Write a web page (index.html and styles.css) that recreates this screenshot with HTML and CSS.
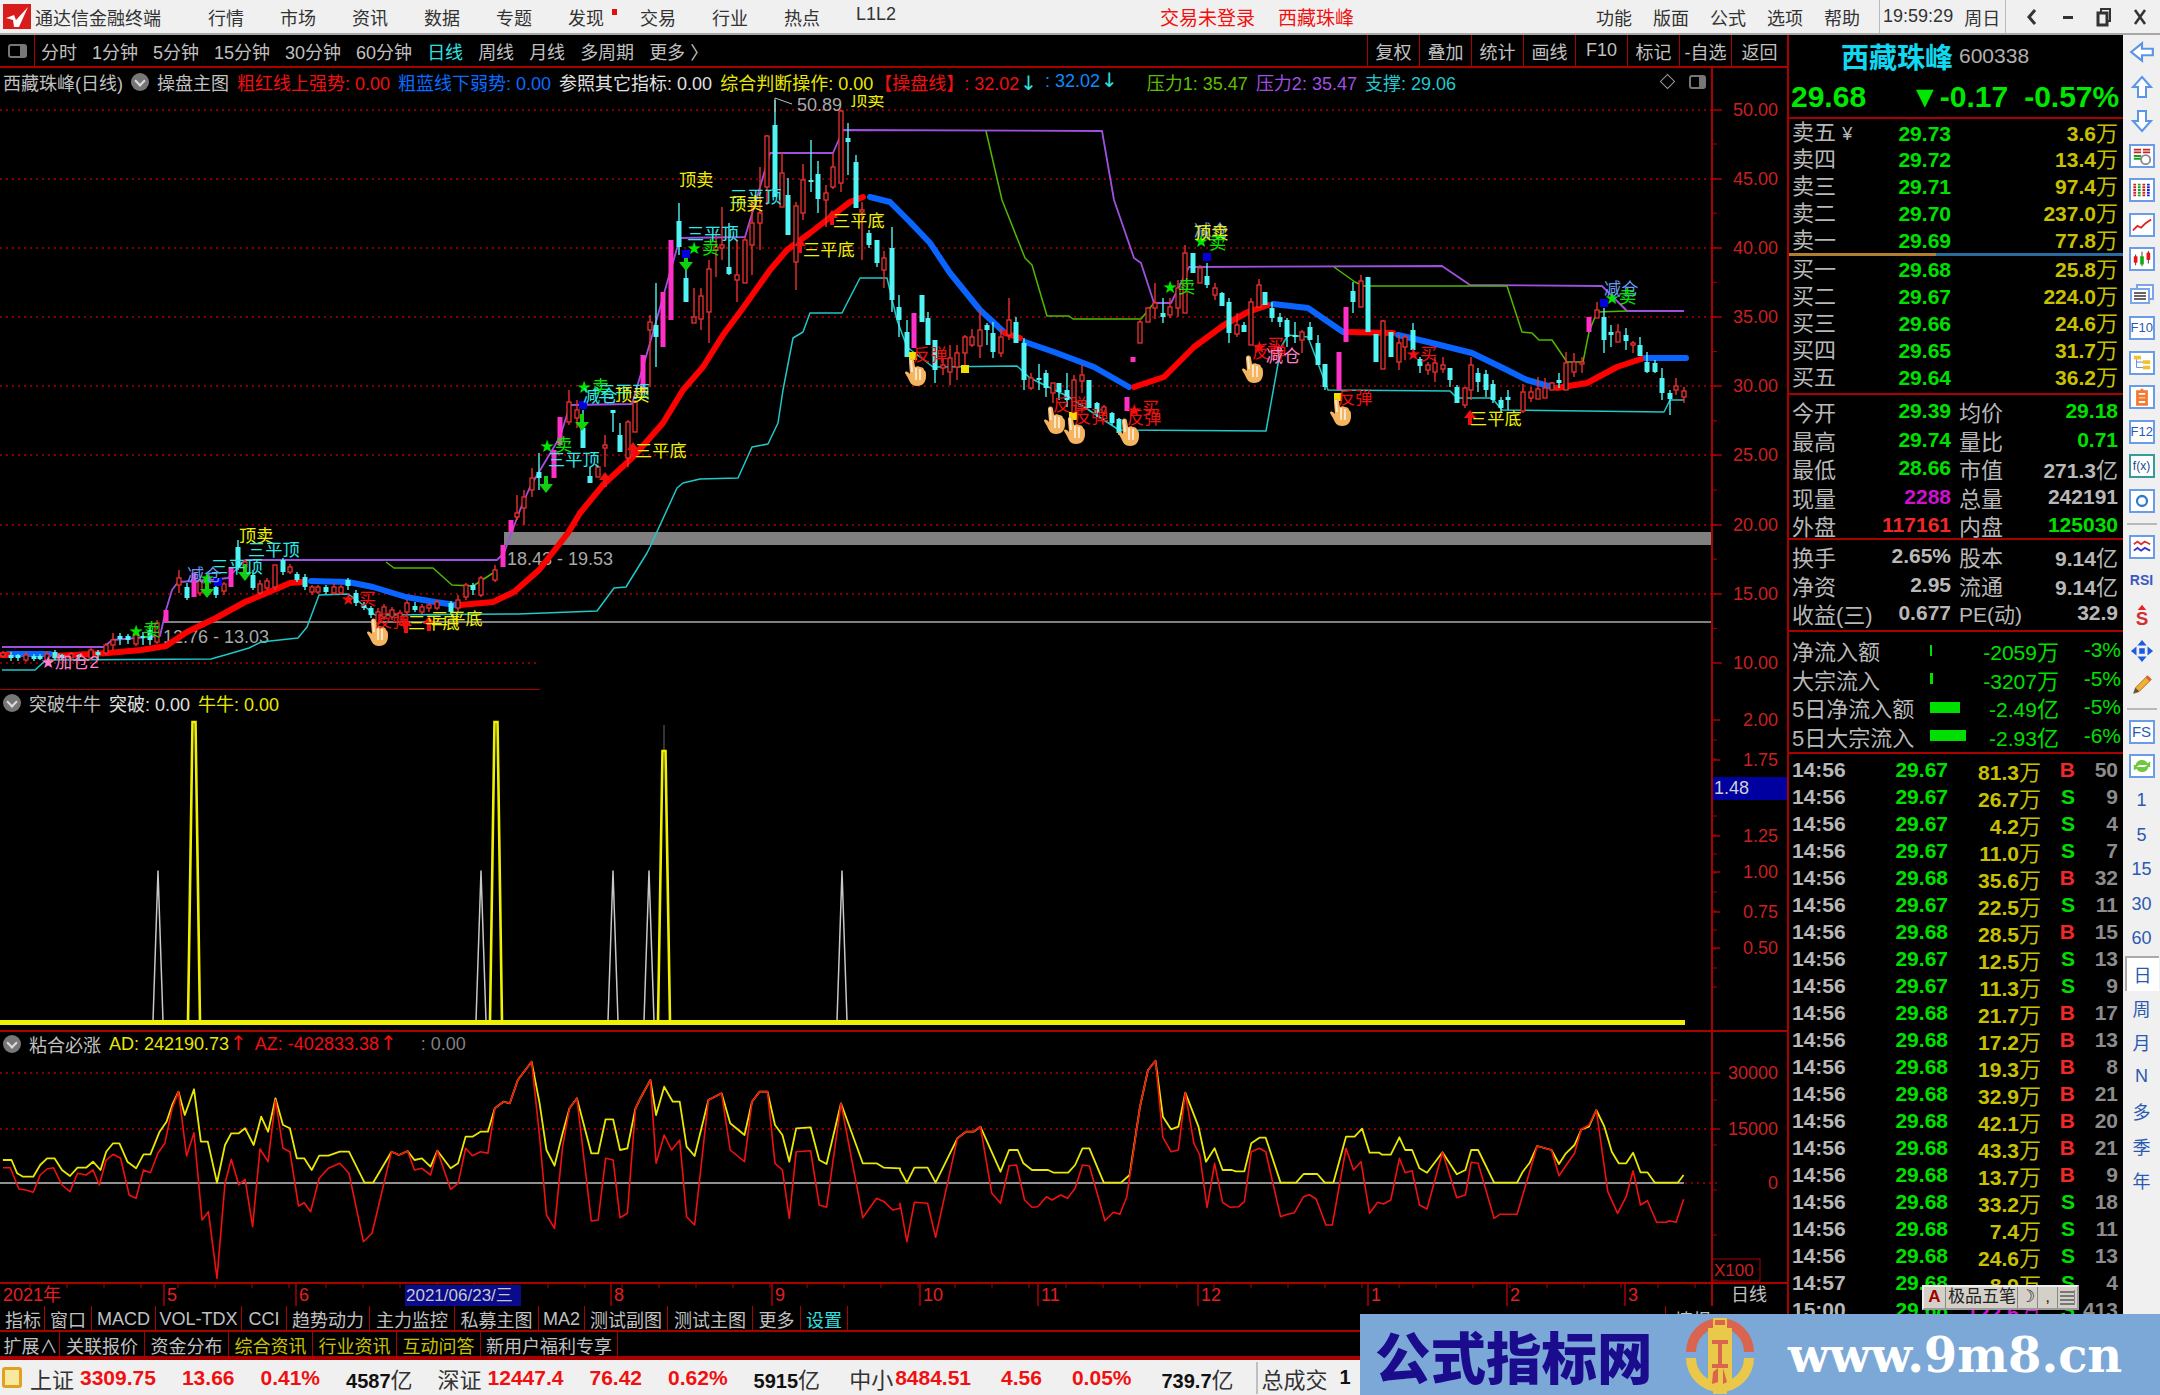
FILE: index.html
```html
<!DOCTYPE html>
<html lang="zh-CN">
<head>
  <meta charset="UTF-8">
  <title>通达信金融终端</title>
  <link rel="stylesheet" href="styles.css">
</head>
<body>

  <header class="titlebar">
    <svg class="app-logo" viewBox="0 0 28 25"><rect width="28" height="25" fill="#d81c1c"/><path d="M3 14 L11 11 L13 16 L25 3 L16 23 L11 23 L10 16 Z" fill="#fff"/></svg>
    <span class="app-name">通达信金融终端</span>
    <nav class="menu">
      <span>行情</span><span>市场</span><span>资讯</span><span>数据</span><span>专题</span>
      <span class="has-dot">发现</span><span>交易</span><span>行业</span><span>热点</span><span>L1L2</span>
    </nav>
    <span class="login">交易未登录</span>
    <span class="login name">西藏珠峰</span>
    <nav class="menu right">
      <span>功能</span><span>版面</span><span>公式</span><span>选项</span><span>帮助</span>
    </nav>
    <div class="clock"><span>19:59:29</span><span>周日</span></div>
    <div class="winbtns">
      <svg viewBox="0 0 16 20"><path d="M11 3 L5 10 L11 17" fill="none" stroke="#333" stroke-width="3"/></svg>
      <svg viewBox="0 0 16 20"><rect x="3" y="9" width="10" height="3" fill="#333"/></svg>
      <svg viewBox="0 0 16 20"><rect x="5" y="2" width="9" height="12" fill="none" stroke="#333" stroke-width="2"/><rect x="2" y="6" width="9" height="12" fill="#f0f0f0" stroke="#333" stroke-width="3"/></svg>
      <svg viewBox="0 0 16 20"><path d="M3 3 L13 17 M13 3 L3 17" stroke="#333" stroke-width="2.5"/></svg>
    </div>
  </header>

  <div class="workspace">
    <main class="charts">
      <div class="toolbar">
        <div class="tb-toggle"><i></i></div>
        <div class="periods">
          <span>分时</span><span>1分钟</span><span>5分钟</span><span>15分钟</span><span>30分钟</span><span>60分钟</span>
          <span class="on">日线</span><span>周线</span><span>月线</span><span>多周期</span><span>更多 〉</span>
        </div>
        <div class="tb-btns">
          <span>复权</span><span>叠加</span><span>统计</span><span>画线</span><span>F10</span><span>标记</span><span>-自选</span><span class="last">返回</span>
        </div>
      </div>

      <div class="phead">
        <span class="grey">西藏珠峰(日线)</span>
        <i class="fold"></i>
        <span class="grey">操盘主图</span>
        <span class="red">粗红线上强势: 0.00</span>
        <span class="blue">粗蓝线下弱势: 0.00</span>
        <span class="white">参照其它指标: 0.00</span>
        <span class="yellow">综合判断操作: 0.00</span>
        <span class="red pull">【操盘线】: 32.02<b class="ar cy">↓</b></span>
        <span class="blue2">: 32.02<b class="ar cy">↓</b></span>
        <span class="lime pushed">压力1: 35.47</span>
        <span class="violet">压力2: 35.47</span>
        <span class="aqua">支撑: 29.06</span>
        <span class="head-tools">
          <i class="diamond"></i>
          <i class="mini"></i>
        </span>
      </div>
      <svg id="main-chart" class="plot p-main" viewBox="0 95 1787 595"></svg>

      <div class="phead sub">
        <i class="fold"></i>
        <span class="grey">突破牛牛</span>
        <span class="white">突破: 0.00</span>
        <span class="yellow">牛牛: 0.00</span>
      </div>
      <svg id="spike-chart" class="plot p-spike" viewBox="0 716 1787 316"></svg>

      <div class="phead sub">
        <i class="fold"></i>
        <span class="grey">粘合必涨</span>
        <span class="yellow">AD: 242190.73<b class="ar red">↑</b></span>
        <span class="red">AZ: -402833.38<b class="ar red">↑</b></span>
        <span class="dim">: 0.00</span>
      </div>
      <svg id="ad-chart" class="plot p-ad" viewBox="0 1056 1787 226"></svg>

      <svg id="date-axis" class="plot p-date" viewBox="0 1282 1787 24"></svg>

      <div class="tabs tabs-a">
        <span>指标</span><span>窗口</span><span>MACD</span><span>VOL-TDX</span><span>CCI</span><span>趋势动力</span><span>主力监控</span><span>私募主图</span><span>MA2</span><span>测试副图</span><span>测试主图</span><span>更多</span><span class="aq">设置</span>
        <span class="tabs-end">情报</span>
      </div>
      <div class="tabs tabs-b">
        <span>扩展∧</span><span>关联报价</span><span>资金分布</span><span class="ye">综合资讯</span><span class="ye">行业资讯</span><span class="ye">互动问答</span><span>新用户福利专享</span>
      </div>
    </main>

    <aside class="quote">
      <div class="q-title"><span class="q-name">西藏珠峰</span><span class="q-code">600338</span></div>
      <div class="q-price"><span>29.68</span><span>▼-0.17</span><span>-0.57%</span></div>

      <div class="book">
        <div class="row"><span class="lb">卖五 <small>¥</small></span><b class="gr">29.73</b><b class="ye">3.6<u>万</u></b></div>
        <div class="row"><span class="lb">卖四</span><b class="gr">29.72</b><b class="ye">13.4<u>万</u></b></div>
        <div class="row"><span class="lb">卖三</span><b class="gr">29.71</b><b class="ye">97.4<u>万</u></b></div>
        <div class="row"><span class="lb">卖二</span><b class="gr">29.70</b><b class="ye">237.0<u>万</u></b></div>
        <div class="row"><span class="lb">卖一</span><b class="gr">29.69</b><b class="ye">77.8<u>万</u></b></div>
        <div class="book-mid"><i></i><i></i></div>
        <div class="row"><span class="lb">买一</span><b class="gr">29.68</b><b class="ye">25.8<u>万</u></b></div>
        <div class="row"><span class="lb">买二</span><b class="gr">29.67</b><b class="ye">224.0<u>万</u></b></div>
        <div class="row"><span class="lb">买三</span><b class="gr">29.66</b><b class="ye">24.6<u>万</u></b></div>
        <div class="row"><span class="lb">买四</span><b class="gr">29.65</b><b class="ye">31.7<u>万</u></b></div>
        <div class="row"><span class="lb">买五</span><b class="gr">29.64</b><b class="ye">36.2<u>万</u></b></div>
      </div>

      <div class="stats">
        <div class="srow"><span class="lb">今开</span><b class="gr">29.39</b><span class="lb">均价</span><b class="gr">29.18</b></div>
        <div class="srow"><span class="lb">最高</span><b class="gr">29.74</b><span class="lb">量比</span><b class="gr">0.71</b></div>
        <div class="srow"><span class="lb">最低</span><b class="gr">28.66</b><span class="lb">市值</span><b class="gy">271.3<u>亿</u></b></div>
        <div class="srow"><span class="lb">现量</span><b class="mg">2288</b><span class="lb">总量</span><b class="gy">242191</b></div>
        <div class="srow"><span class="lb">外盘</span><b class="rd">117161</b><span class="lb">内盘</span><b class="gr">125030</b></div>
      </div>

      <div class="stats fin">
        <div class="srow"><span class="lb">换手</span><b class="gy">2.65%</b><span class="lb">股本</span><b class="gy">9.14<u>亿</u></b></div>
        <div class="srow"><span class="lb">净资</span><b class="gy">2.95</b><span class="lb">流通</span><b class="gy">9.14<u>亿</u></b></div>
        <div class="srow"><span class="lb">收益(三)</span><b class="gy">0.677</b><span class="lb pe">PE(动)</span><b class="gy">32.9</b></div>
      </div>

      <div class="flows">
        <div class="frow"><span class="lb">净流入额</span><i class="bar" style="width:2px;height:11px"></i><b class="gr">-2059<u>万</u></b><b class="gr">-3%</b></div>
        <div class="frow"><span class="lb">大宗流入</span><i class="bar" style="width:3px;height:11px"></i><b class="gr">-3207<u>万</u></b><b class="gr">-5%</b></div>
        <div class="frow"><span class="lb">5日净流入额</span><i class="bar" style="width:30px;height:11px"></i><b class="gr">-2.49<u>亿</u></b><b class="gr">-5%</b></div>
        <div class="frow"><span class="lb">5日大宗流入</span><i class="bar" style="width:36px;height:11px"></i><b class="gr">-2.93<u>亿</u></b><b class="gr">-6%</b></div>
      </div>

      <div class="trades">
        <div class="trow"><b>14:56</b><b class="gr">29.67</b><b class="ye">81.3<u>万</u></b><b class="rd">B</b><b class="ct">50</b></div>
        <div class="trow"><b>14:56</b><b class="gr">29.67</b><b class="ye">26.7<u>万</u></b><b class="gr">S</b><b class="ct">9</b></div>
        <div class="trow"><b>14:56</b><b class="gr">29.67</b><b class="ye">4.2<u>万</u></b><b class="gr">S</b><b class="ct">4</b></div>
        <div class="trow"><b>14:56</b><b class="gr">29.67</b><b class="ye">11.0<u>万</u></b><b class="gr">S</b><b class="ct">7</b></div>
        <div class="trow"><b>14:56</b><b class="gr">29.68</b><b class="ye">35.6<u>万</u></b><b class="rd">B</b><b class="ct">32</b></div>
        <div class="trow"><b>14:56</b><b class="gr">29.67</b><b class="ye">22.5<u>万</u></b><b class="gr">S</b><b class="ct">11</b></div>
        <div class="trow"><b>14:56</b><b class="gr">29.68</b><b class="ye">28.5<u>万</u></b><b class="rd">B</b><b class="ct">15</b></div>
        <div class="trow"><b>14:56</b><b class="gr">29.67</b><b class="ye">12.5<u>万</u></b><b class="gr">S</b><b class="ct">13</b></div>
        <div class="trow"><b>14:56</b><b class="gr">29.67</b><b class="ye">11.3<u>万</u></b><b class="gr">S</b><b class="ct">9</b></div>
        <div class="trow"><b>14:56</b><b class="gr">29.68</b><b class="ye">21.7<u>万</u></b><b class="rd">B</b><b class="ct">17</b></div>
        <div class="trow"><b>14:56</b><b class="gr">29.68</b><b class="ye">17.2<u>万</u></b><b class="rd">B</b><b class="ct">13</b></div>
        <div class="trow"><b>14:56</b><b class="gr">29.68</b><b class="ye">19.3<u>万</u></b><b class="rd">B</b><b class="ct">8</b></div>
        <div class="trow"><b>14:56</b><b class="gr">29.68</b><b class="ye">32.9<u>万</u></b><b class="rd">B</b><b class="ct">21</b></div>
        <div class="trow"><b>14:56</b><b class="gr">29.68</b><b class="ye">42.1<u>万</u></b><b class="rd">B</b><b class="ct">20</b></div>
        <div class="trow"><b>14:56</b><b class="gr">29.68</b><b class="ye">43.3<u>万</u></b><b class="rd">B</b><b class="ct">21</b></div>
        <div class="trow"><b>14:56</b><b class="gr">29.68</b><b class="ye">13.7<u>万</u></b><b class="rd">B</b><b class="ct">9</b></div>
        <div class="trow"><b>14:56</b><b class="gr">29.68</b><b class="ye">33.2<u>万</u></b><b class="gr">S</b><b class="ct">18</b></div>
        <div class="trow"><b>14:56</b><b class="gr">29.68</b><b class="ye">7.4<u>万</u></b><b class="gr">S</b><b class="ct">11</b></div>
        <div class="trow"><b>14:56</b><b class="gr">29.68</b><b class="ye">24.6<u>万</u></b><b class="gr">S</b><b class="ct">13</b></div>
        <div class="trow"><b>14:57</b><b class="gr">29.68</b><b class="ye">8.9<u>万</u></b><b class="gr">S</b><b class="ct">4</b></div>
        <div class="trow"><b>15:00</b><b class="gr">29.68</b><b class="mg">122.6<u>万</u></b><b class="gr">S</b><b class="ct">413</b></div>
      </div>
    </aside>

    <aside class="iconbar">
      <span class="ib"><svg viewBox="0 0 24 22"><path d="M2 11 L12 3 V8 H22 V14 H12 V19 Z" fill="#fff" stroke="#5a95e8" stroke-width="2"/></svg></span>
      <span class="ib"><svg viewBox="0 0 24 24"><path d="M12 2 L21 12 H16 V22 H8 V12 H3 Z" fill="#fff" stroke="#5a95e8" stroke-width="2"/></svg></span>
      <span class="ib"><svg viewBox="0 0 24 24"><path d="M12 22 L21 12 H16 V2 H8 V12 H3 Z" fill="#fff" stroke="#5a95e8" stroke-width="2"/></svg></span>
      <span class="ib"><svg class="box" viewBox="0 0 24 22"><path d="M3 4h8M3 7h8" stroke="#c22" stroke-width="2"/><path d="M3 11h8M3 14h8" stroke="#292" stroke-width="2"/><path d="M13 4h8M13 7h8" stroke="#c22" stroke-width="2"/><circle cx="16" cy="15" r="5" fill="#fff" stroke="#888" stroke-width="2"/></svg></span>
      <span class="ib"><svg class="box" viewBox="0 0 24 22"><path d="M4 4v14" stroke="#c22" stroke-width="3" stroke-dasharray="2 1"/><path d="M9 4v14" stroke="#292" stroke-width="3" stroke-dasharray="2 1"/><path d="M14 4v14" stroke="#c22" stroke-width="3" stroke-dasharray="2 1"/><path d="M19 4v14" stroke="#22c" stroke-width="3" stroke-dasharray="2 1"/></svg></span>
      <span class="ib"><svg class="box" viewBox="0 0 24 22"><path d="M2 17 L7 12 L11 14 L16 9 L22 5" fill="none" stroke="#d22" stroke-width="2"/></svg></span>
      <span class="ib"><svg class="box" viewBox="0 0 24 22"><path d="M5 6v12M12 3v16M19 2v14" stroke="#333"/><rect x="3" y="8" width="4" height="7" fill="#e11"/><rect x="10" y="8" width="4" height="9" fill="#1a1"/><rect x="17" y="4" width="4" height="8" fill="#e11"/></svg></span>
      <span class="ib"><svg viewBox="0 0 26 22"><rect x="8" y="2" width="16" height="14" fill="#fff" stroke="#7aa5e8" stroke-width="2"/><rect x="2" y="6" width="18" height="14" fill="#fff" stroke="#7aa5e8" stroke-width="2"/><path d="M5 10h12M5 13h12M5 16h12" stroke="#666" stroke-width="2"/></svg></span>
      <span class="ib"><em class="ibt">F10</em></span>
      <span class="ib"><svg class="box" viewBox="0 0 24 22"><rect x="3" y="3" width="8" height="4" fill="#f3c030"/><rect x="13" y="8" width="8" height="4" fill="#f3c030"/><rect x="13" y="14" width="8" height="4" fill="#f3c030"/><path d="M6 7v9h7M6 10h7" fill="none" stroke="#58c"/></svg></span>
      <span class="ib"><svg class="box" viewBox="0 0 24 22"><path d="M7 5h10v14h-10z M12 2v3 M7 10h10 M7 14h10" fill="none" stroke="#f47a30" stroke-width="3"/></svg></span>
      <span class="ib"><em class="ibt">F12</em></span>
      <span class="ib"><em class="ibt fx">f(x)</em></span>
      <span class="ib"><svg class="box" viewBox="0 0 24 22"><circle cx="12" cy="11" r="5.5" fill="none" stroke="#2a7ad0" stroke-width="2.5"/></svg></span>
      <i class="ib-sep"></i>
      <span class="ib"><svg class="box" viewBox="0 0 24 22"><path d="M3 8 L7 5 L11 8 L15 5 L21 8" fill="none" stroke="#d33" stroke-width="2"/><path d="M3 15 L7 12 L11 15 L15 12 L21 15" fill="none" stroke="#33c" stroke-width="2"/></svg></span>
      <span class="ib"><em class="ibt rsi">RSI</em></span>
      <span class="ib"><svg viewBox="0 0 24 28"><path d="M12 1 L17 7 H7 Z" fill="#e22"/><text x="12" y="25" text-anchor="middle" class="ib-s">S</text></svg></span>
      <span class="ib"><svg viewBox="0 0 26 26"><path d="M13 1 L18 7 H8 Z M13 25 L18 19 H8 Z M1 13 L7 8 V18 Z M25 13 L19 8 V18 Z" fill="#1a5ce0"/><rect x="10" y="10" width="6" height="6" fill="#1a5ce0"/></svg></span>
      <span class="ib"><svg viewBox="0 0 26 26"><path d="M4 22 L6 16 L19 3 L23 7 L10 20 Z" fill="#f0b030" stroke="#a87020"/><path d="M19 3 L23 7 L21 9 L17 5 Z" fill="#e85a30"/><path d="M4 22 L6 16 L10 20 Z" fill="#555"/></svg></span>
      <i class="ib-sep"></i>
      <span class="ib"><em class="ibt fs">FS</em></span>
      <span class="ib"><svg class="box" viewBox="0 0 24 22"><path d="M5 10 A7 7 0 0 1 18 8 L21 6 V12 H15 L18 10 M19 12 A7 7 0 0 1 6 14 L3 16 V10 H9 L6 12" fill="#70c840"/></svg></span>
      <span class="ib txt">1</span><span class="ib txt">5</span><span class="ib txt">15</span><span class="ib txt">30</span><span class="ib txt">60</span>
      <span class="ib txt sel">日</span><span class="ib txt">周</span><span class="ib txt">月</span><span class="ib txt">N</span><span class="ib txt">多</span><span class="ib txt">季</span><span class="ib txt">年</span>
    </aside>
  </div>

  <footer class="statusbar">
    <i class="st-icon"></i>
    <div class="st-group"><span class="st-name">上证</span><b class="first">3309.75</b><b>13.66</b><b>0.41%</b><b class="amt">4587<u>亿</u></b></div>
    <div class="st-group"><span class="st-name">深证</span><b class="first">12447.4</b><b>76.42</b><b>0.62%</b><b class="amt">5915<u>亿</u></b></div>
    <div class="st-group wide"><span class="st-name">中小</span><b class="first">8484.51</b><b>4.56</b><b>0.05%</b><b class="amt">739.7<u>亿</u></b></div>
    <div class="st-total"><span class="st-name">总成交</span><b class="amt">1</b></div>
  </footer>

  <div class="ime">
    <span class="ime-a">A</span><span class="ime-name">极品五笔</span><span class="ime-k">☽</span><span class="ime-k">,</span><span class="ime-k kb"></span>
  </div>

  <div class="watermark">
    <span class="wm-cn">公式指标网</span>
    <svg class="wm-logo" viewBox="0 0 76 78">
      <path d="M4 36 A34 34 0 0 1 72 36 L62 36 A24 24 0 0 0 14 36 Z" fill="#d9654e"/>
      <path d="M4 42 A34 34 0 0 0 72 42 L62 42 A24 24 0 0 1 14 42 Z" fill="#e9c84a"/>
      <path d="M31 2 H45 V12 H50 V72 H45 V78 H31 V72 H26 V12 H31 Z" fill="#e9c84a"/>
      <path d="M33 4 H43 V9 H33 Z M30 24 H46 V28 H30 Z M30 48 H46 V52 H30 Z M36 28 H40 V48 H36 Z M31 56 L36 52 L36 66 L30 68 Z M41 52 L45 66 L41 68 Z" fill="#d9654e"/>
    </svg>
    <span class="wm-url">www.9m8.cn</span>
  </div>

  <script src="chart.js"></script>
</body>
</html>
```

FILE: styles.css
```css
* {
  box-sizing: border-box;
}

html, body {
  margin: 0;
  padding: 0;
}

body {
  position: relative;
  width: 2160px;
  height: 1395px;
  overflow: hidden;
  background: #000;
  color: #c0c0c0;
  font-family: "Liberation Sans", "Noto Sans CJK SC", sans-serif;
  font-size: 18px;
}

u {
  text-decoration: none;
}

/* title bar */
.titlebar {
  display: flex;
  align-items: center;
  height: 35px;
  padding-left: 3px;
  background: #f0f0f0;
  border-bottom: 2px solid #a8a8a8;
  color: #333;
}

.app-logo {
  width: 28px;
  height: 25px;
}

.app-name {
  margin-left: 4px;
  width: 173px;
}

.menu {
  display: flex;
  gap: 36px;
}

.menu span {
  white-space: nowrap;
}

.has-dot {
  position: relative;
}

.has-dot::after {
  content: "";
  position: absolute;
  left: 44px;
  top: 5px;
  width: 5px;
  height: 6px;
  background: #e01010;
}

.login {
  color: #f01010;
  font-size: 19px;
  margin-left: 264px;
}

.login.name {
  margin-left: 23px;
}

.menu.right {
  margin-left: 242px;
  gap: 21px;
}

.clock {
  display: flex;
  align-items: center;
  gap: 11px;
  height: 33px;
  margin-left: 19px;
  padding: 0 5px 0 3px;
  border-left: 1px solid #bbb;
  border-right: 1px solid #bbb;
}

.winbtns {
  display: flex;
  gap: 20px;
  margin-left: 18px;
}

.winbtns svg {
  width: 16px;
  height: 20px;
}

/* main layout */
.workspace {
  display: flex;
  height: 1323px;
}

.charts {
  width: 1787px;
  flex: none;
}

.toolbar {
  display: flex;
  height: 33px;
  border-bottom: 2px solid #aa0000;
}

.tb-toggle {
  width: 35px;
  border-right: 1px solid #aa0000;
  display: flex;
  align-items: center;
  justify-content: center;
}

.tb-toggle i {
  width: 19px;
  height: 14px;
  border: 2px solid #777;
  border-radius: 3px;
  border-right-width: 7px;
  display: block;
}

.periods {
  display: flex;
  align-items: center;
  gap: 15px;
  margin-left: 6px;
}

.periods .on {
  color: #30e0e0;
}

.tb-btns {
  display: flex;
  margin-left: auto;
}

.tb-btns span {
  width: 52px;
  display: flex;
  align-items: center;
  justify-content: center;
  border-left: 1px solid #aa0000;
}

.tb-btns .last {
  width: 56px;
}

/* panel headers */
.phead {
  display: flex;
  align-items: center;
  gap: 8px;
  width: 1713px;
  height: 27px;
  padding-left: 3px;
  border-right: 2px solid #aa0000;
  white-space: nowrap;
}

.phead.sub {
  height: 24px;
  gap: 8px;
}

.fold {
  display: block;
  width: 18px;
  height: 18px;
  border-radius: 50%;
  background: #777;
  position: relative;
}

.fold::after {
  content: "";
  position: absolute;
  left: 5px;
  top: 4px;
  width: 6px;
  height: 6px;
  border-right: 2px solid #ddd;
  border-bottom: 2px solid #ddd;
  transform: rotate(45deg);
}

.ar {
  font-family: "DejaVu Sans", sans-serif;
  font-weight: normal;
  font-size: 20px;
  line-height: 18px;
  margin-left: 1px;
}

.grey { color: #c0c0c0; }
.white { color: #e0e0e0; }
.dim { color: #808080; margin-left: 16px; }
.red { color: #f01010; }
.blue { color: #0a6cff; }
.blue2 { color: #0a8cff; }
.yellow { color: #e8e800; }
.lime { color: #60c000; }
.violet { color: #a050e0; }
.aqua { color: #20c8d0; }
.cy { color: #30e0e0; }

.pull {
  margin-left: -7px;
}

.pushed {
  margin-left: 21px;
}

.head-tools {
  display: flex;
  align-items: center;
  gap: 16px;
  margin-left: auto;
  margin-right: 5px;
}

.diamond {
  display: block;
  width: 11px;
  height: 11px;
  border: 1px solid #999;
  transform: rotate(45deg);
}

.mini {
  display: block;
  width: 17px;
  height: 14px;
  border: 2px solid #777;
  border-right-width: 7px;
  border-radius: 3px;
}

/* charts */
.plot {
  display: block;
  width: 1787px;
  font-family: "Liberation Sans", "Noto Sans CJK SC", sans-serif;
}

.p-main { height: 595px; }
.p-spike { height: 316px; overflow: visible; }
.p-ad { height: 226px; }
.p-date { height: 24px; }

.p-main + .phead {
  height: 26px;
}

/* bottom tabs */
.tabs {
  display: grid;
  height: 26px;
  border-bottom: 2px solid #aa0000;
  padding-left: 2px;
  white-space: nowrap;
}

.tabs-a {
  grid-template-columns: 43px 47px 64px 86px 45px 83px 85px 84px 46px 83px 85px 48px 47px 1fr;
}

.tabs-b {
  grid-template-columns: 58px 85px 84px 84px 84px 84px 137px 1fr;
}

.tabs span {
  display: flex;
  align-items: center;
  justify-content: center;
  border-right: 1px solid #aa0000;
  font-size: 18px;
}

.tabs .ye { color: #c8c000; }
.tabs .aq { color: #30e0e0; }

.tabs .tabs-end {
  justify-self: end;
  width: 122px;
  justify-content: flex-start;
  padding-left: 9px;
  border-left: 1px solid #aa0000;
  border-right: 0;
}

/* right quote panel */
.quote {
  width: 336px;
  flex: none;
  border-left: 2px solid #aa0000;
  font-size: 21px;
  overflow: hidden;
}

.q-title {
  display: flex;
  align-items: center;
  height: 41px;
  padding-left: 52px;
  gap: 6px;
}

.q-name {
  color: #10d8f0;
  font-size: 28px;
  font-weight: bold;
}

.q-code {
  font-size: 21px;
  color: #b0b0b0;
}

.q-price {
  display: flex;
  align-items: center;
  height: 43px;
  padding-left: 2px;
  border-bottom: 2px solid #aa0000;
  color: #00e800;
  font-size: 30px;
  font-weight: bold;
}

.q-price span:nth-child(2) {
  margin-left: 44px;
}

.q-price span:nth-child(3) {
  margin-left: 16px;
}

.lb {
  color: #b8b8b8;
  font-size: 22px;
  font-weight: normal;
  white-space: nowrap;
}

.lb small {
  font-size: 18px;
}

b u {
  font-weight: normal;
  font-size: 22px;
}

.gr { color: #00e000; }
.ye { color: #c8c000; }
.gy { color: #b8b8b8; }
.mg { color: #d010d0; }
.rd { color: #f02828; }

.book {
  border-bottom: 2px solid #aa0000;
  height: 276px;
}

.row {
  display: grid;
  grid-template-columns: 87px 72px 167px;
  align-items: center;
  height: 27px;
  padding-left: 3px;
  line-height: 27px;
}

.row b, .srow b, .trow b {
  text-align: right;
  white-space: nowrap;
}

.book-mid {
  display: flex;
  height: 3px;
  margin: -1px 0 0;
}

.book-mid i:first-child {
  width: 147px;
  background: #b08030;
}

.book-mid i:last-child {
  flex: 1;
  background: #2a6ca0;
}

.stats {
  border-bottom: 2px solid #aa0000;
  height: 145px;
}

.stats.fin {
  height: 92px;
}

.srow {
  display: grid;
  grid-template-columns: 87px 72px 72px 95px;
  align-items: center;
  height: 28.5px;
  padding-left: 3px;
}

.srow .lb:nth-child(3) {
  padding-left: 8px;
}

.pe {
  font-size: 21px;
  color: #b8b8b8;
}

.flows {
  border-bottom: 2px solid #aa0000;
  height: 122px;
  padding-top: 2px;
}

.frow {
  display: grid;
  grid-template-columns: 138px 50px 79px 62px;
  align-items: center;
  height: 28.5px;
  padding-left: 3px;
}

.frow b {
  text-align: right;
  font-weight: normal;
  white-space: nowrap;
}

.bar {
  display: block;
  background: #00e000;
}

.trow {
  display: grid;
  grid-template-columns: 100px 56px 93px 34px 43px;
  align-items: center;
  height: 27px;
  padding-left: 3px;
}

.trow b:first-child {
  text-align: left;
  color: #b8b8b8;
}

.trow .ct {
  color: #8c8c8c;
}

/* side icons */
.iconbar {
  flex: 1;
  background: #f0f0f0;
  display: flex;
  flex-direction: column;
  align-items: center;
}

.ib {
  display: flex;
  align-items: center;
  justify-content: center;
  width: 34px;
  height: 34.5px;
  flex: none;
}

.ib svg {
  width: 26px;
  height: 24px;
}

.ib svg.box {
  background: #fff;
  border: 2px solid #6a9ce8;
}

.ibt {
  display: block;
  width: 26px;
  height: 24px;
  background: #fff;
  border: 2px solid #6a9ce8;
  color: #2a5ab0;
  font-style: normal;
  font-size: 13px;
  line-height: 20px;
  text-align: center;
}

.ibt.fx {
  border-color: #3a9a9a;
  color: #1a4a90;
  font-size: 12px;
}

.ibt.rsi {
  background: none;
  border: 0;
  color: #3a5ac0;
  font-weight: bold;
  font-size: 14px;
}

.ibt.fs {
  font-size: 15px;
}

.ib-s {
  font-size: 22px;
  font-weight: bold;
  fill: #d03030;
}

.ib-sep {
  display: block;
  width: 30px;
  height: 2px;
  margin: 5px 0;
  background: #b8b8b8;
}

.ib.txt {
  color: #2a5ab0;
  font-size: 18px;
}

.ib.sel {
  background: #fff;
  border-top: 2px solid #aaa;
  border-left: 2px solid #aaa;
  width: 34px;
}

/* status bar */
.statusbar {
  display: flex;
  align-items: center;
  gap: 25px;
  height: 37px;
  background: #f0f0f0;
  border-top: 2px solid #aa0000;
  color: #333;
  padding-left: 2px;
  white-space: nowrap;
}

.st-icon {
  display: block;
  width: 20px;
  height: 21px;
  margin-right: -21px;
  border: 3px solid #e0a020;
  border-radius: 3px;
  background: #f8e8a0;
}

.st-group {
  display: flex;
  align-items: center;
  gap: 26px;
  font-size: 21px;
}

.st-group:first-of-type {
  margin-left: 4px;
}

.st-group.wide {
  gap: 30px;
  margin-left: 4px;
}

.st-group.wide .st-name {
  margin-right: -28px;
}

.st-name {
  font-size: 22px;
  color: #333;
  margin-right: -20px;
}

.st-group b {
  color: #f01010;
}

.st-group b.amt, .st-total b.amt {
  color: #111;
  font-size: 20px;
}

.st-group b u {
  color: #333;
}

.st-total {
  display: flex;
  gap: 12px;
  align-items: center;
  margin-left: -3px;
  padding-left: 4px;
  border-left: 2px solid #c0c0c0;
}

.st-total .st-name {
  margin-right: 0;
}

/* overlays */
.ime {
  position: absolute;
  left: 1922px;
  top: 1285px;
  width: 157px;
  height: 25px;
  display: flex;
  background: #d4d0c8;
  border: 2px outset #eee;
  color: #222;
  font-size: 17px;
  line-height: 20px;
  white-space: nowrap;
}

.ime span {
  border-right: 1px solid #888;
  padding: 0 2px;
  text-align: center;
}

.ime-a {
  color: #a00000;
  width: 22px;
  font-weight: bold;
}

.ime-name {
  width: 72px;
}

.ime-k {
  width: 20px;
}

.ime .kb {
  flex: 1;
  margin: 3px 2px;
  background: repeating-linear-gradient(0deg, #777 0 2px, #d4d0c8 2px 4px);
}

.watermark {
  position: absolute;
  left: 1360px;
  top: 1314px;
  width: 800px;
  height: 81px;
  background: #7ca8d8;
  display: flex;
  align-items: center;
}

.wm-cn {
  margin-left: 15px;
  width: 307px;
  color: #1a0c8c;
  font-size: 55.5px;
  font-weight: 900;
  white-space: nowrap;
}

.wm-logo {
  width: 76px;
  height: 78px;
}

.wm-url {
  margin-left: 30px;
  color: #fff;
  font-family: "DejaVu Serif", serif;
  font-weight: bold;
  font-size: 48px;
  white-space: nowrap;
}
```

FILE: chart.js
```js
// candles: x, high, top, bottom, low, type (r up, c down, m magenta)
const candles = [
  [3,651,653,656,658,'r'],[11,652,655,658,661,'c'],[18,654,655,658,661,'c'],[26,652,655,660,662,'r'],[34,654,656,659,661,'c'],[40,654,656,659,660,'c'],[47,651,654,660,662,'r'],[55,650,652,658,660,'c'],[62,654,655,658,660,'c'],[71,652,654,658,660,'r'],[79,654,655,657,660,'c'],[91,648,650,658,660,'r'],[98,650,652,655,660,'c'],[106,643,645,653,655,'r'],[113,633,640,645,650,'r'],[120,633,636,639,645,'c'],[128,634,636,640,644,'c'],[136,630,635,644,646,'r'],[143,632,636,638,645,'c'],[150,625,630,640,645,'c'],[157,620,623,642,644,'r'],
  [166,600,610,622,624,'m'],[179,570,578,585,593,'r'],[187,583,587,598,600,'c'],[194,573,573,597,597,'m'],[200,580,581,593,596,'r'],[216,585,587,595,598,'c'],[224,582,584,591,595,'r'],[231,567,567,587,587,'m'],[238,540,547,568,570,'c'],[245,560,562,567,572,'r'],[253,570,575,588,590,'c'],[260,580,584,593,595,'r'],[267,578,581,588,590,'r'],[275,565,565,587,590,'r'],[283,558,560,572,575,'c'],[290,564,567,572,574,'r'],[297,572,574,580,582,'c'],[305,574,577,587,590,'c'],[312,585,587,592,595,'r'],[318,585,587,592,594,'r'],[326,585,587,592,594,'c'],[334,583,587,593,595,'r'],[341,585,587,593,595,'r'],[348,578,580,586,590,'c'],[356,590,593,603,606,'c'],[364,602,605,608,610,'c'],[371,606,608,615,618,'c'],[378,608,612,623,625,'r'],[384,604,607,617,620,'r'],[392,607,610,617,620,'r'],[400,610,613,622,624,'r'],[407,600,603,612,615,'r'],[415,602,606,610,612,'c'],[422,604,607,612,614,'r'],[429,603,605,608,612,'r'],[437,600,602,608,610,'r'],[451,601,603,612,615,'c'],[458,595,600,608,612,'r'],[466,583,585,597,600,'r'],[473,583,585,590,595,'c'],[481,576,578,595,597,'r'],[495,565,570,580,582,'r'],[503,545,545,567,567,'m'],[511,520,520,532,532,'m'],[517,495,513,517,520,'r'],[524,490,497,508,525,'r'],
  [532,468,478,490,497,'r'],[539,453,472,478,490,'c'],[554,450,450,478,478,'m'],[560,417,417,445,445,'m'],[569,390,402,422,425,'r'],[577,400,410,418,428,'r'],[583,410,428,448,448,'c'],[590,467,476,483,483,'c'],[598,465,467,477,477,'r'],[605,435,445,448,467,'r'],[613,410,410,413,432,'c'],[620,423,435,452,452,'c'],[628,420,422,458,467,'r'],[635,400,402,432,432,'r'],[643,355,355,393,393,'m'],[650,315,322,330,387,'r'],[656,283,325,337,367,'c'],[663,292,292,347,347,'m'],[671,240,240,320,320,'m'],[679,203,221,247,255,'c'],[686,260,278,302,302,'c'],[694,288,317,323,323,'r'],[701,288,296,319,330,'r'],[709,260,269,312,343,'r'],[716,233,247,250,277,'r'],[722,207,245,248,260,'r'],[729,223,267,274,275,'c'],[737,240,275,280,302,'r'],[745,237,240,283,283,'r'],[752,203,223,245,275,'r'],[760,167,213,223,250,'r'],[767,135,136,187,205,'r'],[775,100,125,197,197,'c'],[782,152,173,207,207,'r'],[788,178,195,235,235,'c'],[796,202,206,262,290,'r'],[803,164,180,213,220,'r'],[811,140,180,182,192,'c'],[818,161,174,199,213,'c'],[826,185,193,200,227,'r'],[833,153,167,187,189,'r'],[841,110,111,183,192,'r'],[848,123,138,142,175,'c'],[856,155,162,208,208,'c'],[862,202,210,212,260,'r'],[869,230,233,245,248,'c'],[877,240,240,263,267,'c'],[884,251,258,270,288,'r'],[892,227,248,300,312,'c'],[899,295,307,320,337,'c'],[907,320,332,357,357,'c'],[914,313,313,348,348,'m'],[922,295,295,322,322,'c'],[928,312,318,345,345,'c'],[935,340,340,370,383,'c'],[943,358,365,368,375,'r'],
  [950,345,358,372,385,'r'],[957,345,353,367,380,'r'],[965,335,337,353,367,'r'],[972,329,337,345,347,'r'],[980,310,330,346,358,'r'],[987,323,325,330,345,'c'],[993,322,333,352,358,'c'],[1001,328,337,353,357,'r'],[1009,298,320,335,340,'r'],[1016,317,322,343,343,'c'],[1024,338,343,380,390,'c'],[1031,373,378,388,390,'r'],[1039,364,378,380,390,'c'],[1046,370,373,388,397,'c'],[1053,383,383,393,403,'r'],[1059,383,383,392,400,'c'],[1067,373,390,400,407,'c'],[1074,375,380,413,417,'r'],[1082,365,375,381,393,'r'],[1089,380,380,408,408,'c'],[1097,402,403,413,417,'c'],[1104,405,407,413,415,'r'],[1112,412,413,423,425,'c'],[1119,418,419,433,435,'c'],[1127,397,397,411,411,'m'],[1133,357,357,362,375,'m'],[1140,320,322,343,343,'r'],[1148,307,308,322,322,'r'],[1155,283,303,308,319,'r'],[1163,298,313,317,323,'c'],[1170,298,307,315,318,'r'],[1178,280,288,308,317,'r'],[1185,245,253,313,313,'r'],[1193,253,253,273,273,'c'],[1200,265,268,283,283,'r'],[1207,263,276,285,288,'c'],[1215,283,288,295,300,'r'],[1222,292,293,306,306,'c'],[1229,298,302,333,343,'c'],[1237,313,325,334,337,'r'],[1244,322,325,332,332,'c'],[1251,298,302,345,345,'r'],[1259,279,285,307,307,'r'],[1265,292,292,305,305,'c'],[1272,302,308,318,322,'c'],[1280,313,317,322,327,'c'],[1287,318,320,337,347,'c'],[1295,322,335,337,343,'c'],[1302,330,332,340,353,'r'],[1310,322,327,340,340,'c'],[1318,335,343,365,365,'c'],[1325,364,364,387,390,'c'],[1339,352,352,390,390,'m'],[1346,307,307,342,342,'m'],[1353,282,291,302,313,'c'],[1361,275,281,307,307,'r'],[1368,277,277,332,332,'c'],[1376,334,334,362,362,'c'],[1383,320,321,369,369,'r'],[1391,332,332,357,357,'c'],[1399,335,343,362,370,'r'],[1405,335,337,347,360,'r'],[1413,323,330,350,350,'c'],[1420,357,359,366,373,'c'],[1428,362,365,370,375,'r'],[1435,357,363,372,382,'r'],[1443,357,365,369,373,'r'],[1450,368,368,380,387,'c'],[1457,385,387,403,403,'c'],[1465,387,388,405,408,'r'],[1471,357,365,390,400,'r'],[1478,368,373,382,392,'c'],[1486,370,374,390,397,'c'],[1493,380,384,400,403,'c'],[1501,397,400,408,412,'c'],[1508,390,397,400,410,'c'],[1523,384,392,411,413,'r'],[1531,387,392,398,402,'r'],[1538,377,389,399,399,'r'],[1545,378,388,398,398,'r'],[1552,382,383,390,390,'r'],[1559,373,380,383,388,'c'],[1566,352,363,390,390,'r'],[1574,353,362,372,377,'r'],[1582,357,362,364,373,'r'],[1589,317,317,332,332,'m'],[1597,302,310,318,318,'r'],[1604,308,317,340,353,'c'],[1611,325,332,335,347,'c'],[1618,324,332,342,342,'r'],[1626,328,335,341,350,'c'],[1633,341,343,345,353,'r'],[1640,337,345,356,356,'c'],[1647,352,362,372,373,'c'],[1655,360,363,372,373,'c'],[1662,368,378,393,400,'c'],[1670,390,393,399,415,'c'],[1676,378,386,390,395,'r'],[1684,387,391,397,403,'r']
];

// thick trend line, split where it changes colour
const RED = '#ff0000', BLUE = '#0a64ff';
const trend = [
  [BLUE, [[8,654],[50,654]]],
  [RED, [[2,655],[8,655]]],
  [RED, [[55,656],[108,653],[141,650],[166,646],[187,632],[216,618],[245,602],[269,592],[290,583],[303,582]]],
  [BLUE, [[311,581],[348,582],[373,587],[406,597],[435,602],[456,605]]],
  [RED, [[460,605],[493,602],[514,592],[539,570],[568,533],[580,513],[603,485],[633,457],[663,423],[683,390],[703,367],[723,335],[743,308],[770,270],[787,250],[810,233],[833,215],[850,202],[863,197]]],
  [BLUE, [[870,197],[890,202],[910,222],[930,243],[950,273],[980,310],[1005,333]]],
  [RED, [[1005,333],[1020,338]]],
  [BLUE, [[1025,342],[1054,352],[1094,367],[1129,387]]],
  [RED, [[1134,387],[1164,377],[1194,347],[1224,325],[1248,312],[1268,305]]],
  [BLUE, [[1273,304],[1308,308],[1343,332]]],
  [RED, [[1350,332],[1393,333]]],
  [BLUE, [[1398,335],[1428,342],[1472,353],[1507,370],[1527,380],[1552,387]]],
  [RED, [[1557,388],[1587,383],[1617,367],[1644,358]]],
  [BLUE, [[1646,358],[1686,358]]]
];

const support = [[2,670],[35,670],[46,660],[211,659],[232,653],[249,648],[261,642],[298,638],[307,627],[319,595],[348,594],[357,600],[375,615],[518,614],[597,611],[614,588],[626,587],[647,553],[650,547],[677,488],[683,483],[700,479],[738,478],[752,447],[768,444],[778,423],[783,390],[793,338],[803,332],[810,313],[842,313],[860,278],[887,278],[897,320],[907,347],[933,367],[1017,366],[1030,378],[1069,397],[1119,430],[1266,431],[1281,347],[1288,335],[1308,337],[1328,390],[1450,391],[1457,398],[1492,398],[1502,410],[1664,412],[1670,400],[1684,400]];

const resist = [[2,647],[104,647],[112,640],[160,636],[166,610],[172,590],[178,582],[210,580],[228,578],[245,560],[497,560],[504,553],[520,510],[530,487],[560,437],[570,405],[632,404],[650,343],[667,283],[680,238],[745,237],[763,177],[770,153],[833,153],[843,130],[1102,131],[1114,200],[1134,258],[1141,263],[1154,303],[1171,303],[1189,267],[1442,266],[1470,285],[1602,286],[1627,311],[1684,311]];

const pressure = [
  [[386,562],[394,568],[433,568],[452,585],[473,586],[493,573]],
  [[986,131],[1002,200],[1025,258],[1032,265],[1047,316],[1069,316],[1073,319],[1141,319],[1154,303]],
  [[1334,267],[1355,282],[1363,286],[1507,286],[1522,332],[1532,333],[1539,340],[1552,340],[1567,362],[1583,362],[1589,332],[1597,312],[1627,311]]
];

const Y = '#f0f000', C = '#30e8e8', G = '#00e800', R = '#f01010', P = '#ff80c8', B = '#6a9af0';
// text, x, y centre, colour
const labels = [
  ['顶卖',850,100,Y],['顶卖',679,180,Y],['三平顶',730,197,C],['顶卖',729,204,Y],['三平顶',687,234,C],['卖',702,248,G],
  ['三平底',833,221,Y],['三平底',803,250,Y],['三平底',635,451,Y],['三平顶',548,460,C],['卖',555,445,G],
  ['卖',592,387,G],['减仓',583,396,C],['三平顶',598,392,C],['顶卖',615,395,Y],
  ['反弹',913,355,R],['顶卖',239,536,Y],['三平顶',248,550,C],['三平顶',211,567,C],['减仓',187,575,B],
  ['卖',143,630,G],['加仓2',55,662,P],['买',359,599,R],['反弹',375,621,R],['三平底',408,623,Y],['三平底',431,619,Y],
  ['减仓',1194,231,B],['顶卖',1194,233,Y],['卖',1209,243,G],['卖',1178,287,G],
  ['反弹',1053,405,R],['反弹',1074,417,R],['买',1142,408,R],['反弹',1127,418,R],
  ['买',1267,345,R],['反弹',1252,352,R],['减仓',1266,356,P],['反弹',1338,398,R],['买',1420,354,R],
  ['三平底',1470,419,Y],['减仓',1604,289,B],['卖',1619,297,G]
];
const stars = [[694,248,G],[547,446,G],[584,387,G],[136,631,G],[48,662,P],[348,599,R],[1201,241,G],[1170,287,G],[1134,410,R],[1259,347,R],[1413,354,R],[1612,298,G],[207,578,G]];
const hands = [[915,372],[377,632],[1054,420],[1074,430],[1128,432],[1252,369],[1340,412]];
const downArrows = [[686,258],[582,418],[546,480],[207,585],[245,568]];
const upArrows = [[832,210],[800,238],[633,442],[605,472],[406,618],[429,616],[1470,410]];
const blueDots = [[686,254],[583,405],[1207,257],[1604,303],[218,582]];
const yellowDots = [[913,356],[965,369],[1073,416],[1338,397]];

const AXIS_RED = '#aa0000', LABEL_RED = '#c82020';

function pts(a) {
  return a.map(p => p.join(',')).join(' ');
}

function polyline(a, color, width, extra) {
  return `<polyline points="${pts(a)}" fill="none" stroke="${color}" stroke-width="${width}" stroke-linejoin="round" ${extra || ''}/>`;
}

function line(x1, y1, x2, y2, color, width, extra) {
  return `<line x1="${x1}" y1="${y1}" x2="${x2}" y2="${y2}" stroke="${color}" stroke-width="${width}" ${extra || ''}/>`;
}

function axisText(text, y, color) {
  return `<text x="1778" y="${y}" fill="${color || LABEL_RED}" font-size="18" text-anchor="end" dominant-baseline="central">${text}</text>`;
}

function ticks(from, to, step) {
  let s = '';
  for (let y = from; y <= to; y += step) s += line(1712, y, 1717, y, AXIS_RED, 1);
  return s;
}

function drawCandle(c) {
  const [x, h, t, b, l, type] = c;
  const color = { r: '#f03030', c: '#50f4f4', m: '#ff30c8' }[type];
  let s = line(x, h, x, l, color, type === 'm' ? 0 : 1.4);
  if (type === 'r') {
    s += `<rect x="${x - 2}" y="${t}" width="4" height="${b - t}" fill="#000" stroke="${color}" stroke-width="1.3"/>`;
  } else {
    s += `<rect x="${x - 2.5}" y="${t}" width="5" height="${b - t}" fill="${color}"/>`;
  }
  return s;
}

function hand(x, y) {
  return `<g transform="translate(${x - 11},${y - 14})">
    <path d="M6 1 C8 0 10 1 10 3 L11 9 C13 8 15 8 16 9 C18 9 20 10 20 12 C22 13 22 15 22 18 C22 24 19 28 13 28 C8 28 6 25 4 20 L1 15 C1 13 3 13 5 15 L6 16 L5 4 C5 2 5 2 6 1 Z" fill="#f4b460"/>
    <path d="M7 2 L8 14 M12 10 L12 22 M16 11 L16 22" stroke="#fff" stroke-opacity=".65" stroke-width="2" fill="none"/>
  </g>`;
}

function drawMain() {
  let s = '';
  const prices = [[50,110],[45,179],[40,248],[35,317],[30,386],[25,455],[20,525],[15,594],[10,663]];
  prices.forEach(([v, y]) => {
    s += line(0, y, v === 10 ? 540 : 1711, y, AXIS_RED, 1.5, 'stroke-dasharray="2 4"');
    s += line(1712, y, 1722, y, AXIS_RED, 1.5);
    s += axisText(v.toFixed(2), y);
  });
  s += ticks(144, 660, 34.6);

  // gap bands
  s += `<rect x="504" y="532" width="1207" height="13" fill="#808080"/>`;
  s += line(164, 622, 1711, 622, '#808080', 2);
  s += `<text x="507" y="559" fill="#a8a8a8" font-size="18" dominant-baseline="central">18.43 - 19.53</text>`;
  s += `<text x="163" y="637" fill="#a8a8a8" font-size="18" dominant-baseline="central">12.76 - 13.03</text>`;

  s += polyline(support, '#20c8c8', 1.5);
  s += polyline(resist, '#a050e0', 1.8);
  pressure.forEach(p => { s += polyline(p, '#50b800', 1.5); });
  trend.forEach(([color, p]) => { s += polyline(p, color, 6, 'stroke-linecap="round"'); });
  candles.forEach(c => { s += drawCandle(c); });

  // peak mark
  s += `<path d="M775 112 V98 M775 98 L792 104" stroke="#c0c0c0" stroke-width="1" fill="none"/>`;
  s += `<text x="797" y="105" fill="#a8a8a8" font-size="18" dominant-baseline="central">50.89</text>`;

  downArrows.forEach(([x, y]) => {
    s += `<path d="M${x - 7} ${y + 4} L${x} ${y + 13} L${x + 7} ${y + 4} H${x + 2} V${y - 4} H${x - 2} V${y + 4} Z" fill="#10d010"/>`;
  });
  upArrows.forEach(([x, y]) => {
    s += `<path d="M${x - 6} ${y + 8} L${x} ${y} L${x + 6} ${y + 8} H${x + 2} V${y + 15} H${x - 2} V${y + 8} Z" fill="#f01010"/>`;
  });
  blueDots.forEach(([x, y]) => { s += `<rect x="${x - 4}" y="${y - 4}" width="8" height="8" fill="#0000e0"/>`; });
  yellowDots.forEach(([x, y]) => { s += `<rect x="${x - 4}" y="${y - 4}" width="8" height="8" fill="#f0e000"/>`; });
  hands.forEach(([x, y]) => { s += hand(x, y); });
  stars.forEach(([x, y, color]) => {
    s += `<text x="${x}" y="${y}" fill="${color}" font-size="17" font-family="DejaVu Sans" text-anchor="middle" dominant-baseline="central">★</text>`;
  });
  labels.forEach(([text, x, y, color]) => {
    s += `<text x="${x}" y="${y}" fill="${color}" font-size="17.2" dominant-baseline="central">${text}</text>`;
  });
  // bottom edge of the pane only shows on the left
  s += line(0, 690, 540, 690, AXIS_RED, 2);
  s += line(1712, 95, 1712, 690, AXIS_RED, 2);
  document.getElementById('main-chart').innerHTML = s;
}

function drawSpikes() {
  let s = '';
  [[2.00,720],[1.75,760],[1.25,836],[1.00,872],[0.75,912],[0.50,948]].forEach(([v, y]) => {
    s += line(1712, y, 1720, y, AXIS_RED, 1.5);
    s += axisText(v.toFixed(2), y);
  });
  s += ticks(740, 1000, 19);
  s += `<rect x="1713" y="777" width="74" height="23" fill="#0000a0"/>`;
  s += axisText('1.48', 788, '#d0d0d0').replace('x="1778"', 'x="1749"');

  [158, 481, 613, 649, 842].forEach(x => {
    s += polyline([[x - 5, 1021], [x, 871], [x + 5, 1021]], '#c8c8c8', 1.5);
  });
  s += line(664, 725, 664, 751, '#333', 2);
  [[194, 722], [496, 722], [664, 751]].forEach(([x, y]) => {
    s += `<polygon points="${pts([[x - 6, 1022], [x - 1.5, y], [x + 1.5, y], [x + 6, 1022]])}" fill="#000" stroke="#f0f000" stroke-width="2.6"/>`;
  });
  s += `<rect x="0" y="1020" width="1685" height="5" fill="#f0f000"/>`;
  s += line(0, 1031, 1787, 1031, AXIS_RED, 2);
  s += line(1712, 716, 1712, 1032, AXIS_RED, 2);
  document.getElementById('spike-chart').innerHTML = s;
}

// AD / AZ lines traced in two strips, both scaled by x / 1.742 and 1020 + y / 3
function strip(a, dx) {
  return a.map(([x, y]) => [+(x / 1.742 + dx).toFixed(1), +(1020 + y / 3).toFixed(1)]);
}

const adLeft = [[5,420],[20,420],[30,460],[40,470],[58,470],[70,435],[82,415],[95,415],[108,450],[122,468],[135,443],[150,443],[162,425],[175,450],[185,395],[197,370],[208,370],[222,425],[237,445],[250,403],[262,403],[278,335],[290,305],[300,255],[311,215],[322,285],[338,208],[350,365],[362,365],[378,488],[392,375],[403,340],[416,340],[427,325],[442,375],[455,290],[467,335],[480,235],[493,315],[505,325],[517,415],[530,415],[543,450],[556,407],[572,407],[592,395],[608,395],[635,488],[650,488],[682,395],[695,405],[710,393],[722,420],[735,415],[750,440],[762,392],[785,445],[798,430],[811,350],[823,350],[837,335],[850,335],[862,265],[877,245],[888,250],[902,180],[926,125],[940,250],[952,390],[966,437],[980,340],[992,265],[1005,235],[1030,400],[1042,400],[1055,298],[1068,298],[1080,390],[1093,385],[1107,265],[1117,230],[1133,180],[1143,285],[1157,200],[1172,245],[1184,245],[1196,380],[1210,408],[1234,240],[1257,220],[1272,310],[1297,345],[1310,245],[1323,215],[1337,215],[1350,315],[1363,345],[1375,425],[1387,325],[1412,322],[1427,420],[1440,432],[1465,250],[1503,430],[1527,430],[1540,443],[1568,445]];
const azLeft = [[5,443],[18,443],[33,507],[45,510],[58,517],[70,465],[82,447],[93,443],[108,495],[122,515],[135,460],[150,465],[162,450],[173,495],[185,420],[197,403],[210,415],[225,525],[237,535],[250,450],[262,458],[275,400],[287,370],[300,265],[311,215],[325,408],[338,338],[352,600],[363,575],[378,775],[392,490],[403,418],[416,495],[427,478],[440,620],[453,387],[467,425],[480,240],[493,385],[505,395],[520,558],[530,548],[541,575],[556,475],[572,445],[592,430],[608,460],[633,665],[648,640],[682,395],[695,405],[710,393],[722,450],[735,445],[750,465],[762,392],[785,508],[798,490],[811,385],[823,407],[837,395],[850,400],[862,265],[877,245],[888,250],[902,180],[926,125],[940,350],[952,585],[966,625],[980,380],[992,265],[1005,235],[1030,603],[1042,600],[1055,415],[1068,420],[1080,593],[1093,580],[1107,265],[1117,230],[1133,180],[1143,430],[1157,345],[1170,390],[1184,360],[1196,590],[1210,615],[1234,240],[1257,220],[1272,390],[1297,425],[1310,245],[1323,215],[1337,215],[1350,430],[1363,450],[1375,595],[1387,395],[1412,392],[1427,555],[1440,562],[1465,250],[1503,593],[1527,535],[1540,545],[1555,570],[1568,565]];
const adRight = [[0,450],[12,488],[25,443],[48,443],[62,488],[100,355],[115,335],[128,335],[140,320],[175,455],[190,390],[205,390],[215,430],[230,450],[258,450],[268,458],[293,458],[305,435],[318,385],[330,385],[355,488],[385,488],[400,465],[418,260],[432,150],[445,122],[458,290],[472,328],[485,320],[497,218],[520,320],[533,425],[548,385],[562,450],[578,450],[585,454],[600,454],[612,370],[626,353],[637,353],[663,488],[690,488],[703,462],[727,462],[740,488],[755,488],[777,350],[792,350],[805,326],[818,398],[835,398],[840,404],[855,404],[870,352],[880,390],[892,390],[905,445],[918,458],[945,397],[970,463],[985,450],[995,390],[1007,390],[1035,488],[1075,488],[1085,455],[1097,428],[1110,378],[1135,390],[1148,432],[1160,400],[1175,375],[1187,328],[1200,320],[1213,270],[1227,320],[1240,395],[1252,430],[1265,430],[1277,398],[1290,457],[1302,457],[1315,488],[1355,488],[1365,465]];
const azRight = [[0,550],[12,665],[25,547],[48,550],[62,652],[100,355],[115,335],[128,335],[140,320],[160,520],[175,550],[190,437],[203,435],[217,540],[230,562],[240,560],[255,530],[265,540],[280,525],[292,535],[305,505],[318,435],[330,438],[357,602],[372,577],[383,583],[395,530],[418,260],[432,150],[445,122],[458,352],[472,395],[485,390],[497,218],[512,370],[522,405],[535,562],[548,430],[562,547],[575,562],[590,560],[600,545],[612,395],[626,385],[637,395],[663,590],[675,583],[687,578],[703,530],[713,524],[725,537],[742,615],[753,615],[777,385],[790,450],[803,425],[818,580],[832,547],[842,552],[855,540],[870,415],[880,458],[892,452],[905,555],[918,567],[945,397],[970,533],[985,525],[995,427],[1007,430],[1035,595],[1045,583],[1075,583],[1110,378],[1135,390],[1148,467],[1175,400],[1187,328],[1200,315],[1213,270],[1233,515],[1250,580],[1265,530],[1277,452],[1290,555],[1302,542],[1318,607],[1335,607],[1340,602],[1352,607],[1365,538]];

function drawAD() {
  let s = '';
  [[30000,1073],[15000,1129]].forEach(([v, y]) => {
    s += line(0, y, 1711, y, AXIS_RED, 1.5, 'stroke-dasharray="2 4"');
    s += line(1712, y, 1720, y, AXIS_RED, 1.5);
    s += axisText(v, y);
  });
  s += line(1685, 1183, 1720, 1183, AXIS_RED, 1.5, 'stroke-dasharray="2 4"');
  s += axisText(0, 1183);
  s += ticks(1100, 1280, 45);
  s += line(0, 1183, 1684, 1183, '#909090', 2);
  s += polyline(strip(adLeft, 0).concat(strip(adRight, 900)), '#e8e800', 1.8);
  s += polyline(strip(azLeft, 0).concat(strip(azRight, 900)), '#f01010', 1.6);
  s += `<rect x="1712" y="1259" width="48" height="22" fill="none" stroke="${AXIS_RED}"/>`;
  s += `<text x="1714" y="1270" fill="${LABEL_RED}" font-size="17" dominant-baseline="central">X100</text>`;
  s += line(1712, 1056, 1712, 1283, AXIS_RED, 2);
  document.getElementById('ad-chart').innerHTML = s;
}

function drawDates() {
  let s = line(0, 1283, 1787, 1283, AXIS_RED, 2) + line(1712, 1283, 1712, 1306, AXIS_RED, 2);
  for (let x = 30; x < 1700; x += 37) s += line(x, 1284, x, 1288, AXIS_RED, 1);
  const mk = (t, x) => `<text x="${x}" y="1295" fill="#e02020" font-size="18" dominant-baseline="central">${t}</text>`;
  s += mk('2021年', 3);
  [['5',164],['6',296],['8',611],['9',772],['10',920],['11',1038],['12',1198],['1',1368],['2',1507],['3',1625]].forEach(([t, x]) => {
    s += line(x, 1284, x, 1306, AXIS_RED, 1.5) + mk(t, x + 3);
  });
  s += `<rect x="405" y="1285" width="116" height="21" fill="#0a0a8c"/>`;
  s += `<text x="406" y="1295" fill="#c8c8c8" font-size="17" dominant-baseline="central">2021/06/23/三</text>`;
  s += `<text x="1731" y="1295" fill="#c0c0c0" font-size="18" dominant-baseline="central">日线</text>`;
  document.getElementById('date-axis').innerHTML = s;
}

drawMain();
drawSpikes();
drawAD();
drawDates();
```
